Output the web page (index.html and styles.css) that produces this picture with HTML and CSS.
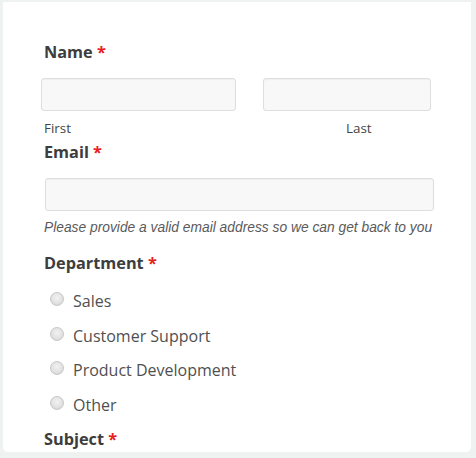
FILE: index.html
```html
<!DOCTYPE html>
<html>
<head>
<meta charset="utf-8">
<link rel="stylesheet" href="styles.css">
</head>
<body>
<div class="card">
  <div class="label label-name">Name <span class="req">*</span></div>
  <div class="name-row">
    <input class="field field-first" type="text">
    <input class="field field-last" type="text">
    <div class="sub">First</div>
    <div class="sub sub-last">Last</div>
  </div>
  <div class="label label-email">Email <span class="req">*</span></div>
  <input class="field field-email" type="text">
  <div class="help">Please provide a valid email address so we can get back to you</div>
  <div class="label label-dept">Department <span class="req">*</span></div>
  <div class="radios">
    <label class="radio"><span class="dot"></span>Sales</label>
    <label class="radio"><span class="dot"></span>Customer Support</label>
    <label class="radio"><span class="dot"></span>Product Development</label>
    <label class="radio"><span class="dot"></span>Other</label>
  </div>
  <div class="label label-subject">Subject <span class="req">*</span></div>
</div>
</body>
</html>
```
FILE: styles.css
```css
html, body {
  margin: 0;
  padding: 0;
}
body {
  width: 476px;
  height: 458px;
  overflow: hidden;
  background: #eef3f2;
  font-family: "Open Sans", sans-serif;
  color: #444;
  padding: 2px 0 0 3px;
  box-sizing: border-box;
}
.card {
  width: 468px;
  height: 450px;
  background: #fff;
  box-sizing: border-box;
  border-radius: 0 0 5px 5px;
  padding: 39px 0 0 38px;
  overflow: hidden;
}
.label {
  font-weight: 700;
  font-size: 16.3px;
  line-height: 22px;
  color: #3d3d3d;
  padding-left: 3px;
}
.req { color: #e8201c; }
.name-row {
  display: grid;
  grid-template-columns: 195px 168px;
  column-gap: 27px;
  margin-top: 15px;
}
.field {
  display: block;
  height: 33px;
  margin: 0;
  box-sizing: border-box;
  background: #f8f8f8;
  border: 1px solid #dedede;
  border-radius: 3px;
  box-shadow: inset 0 1px 1px rgba(0,0,0,0.04);
  outline: none;
}
.sub {
  font-size: 13.4px;
  line-height: 18px;
  margin-top: 8px;
  padding-left: 3px;
  color: #444;
}
.sub-last { padding-left: 83px; }
.label-email { margin-top: 4px; }
.field-email {
  width: 389px;
  margin: 15px 0 0 4px;
}
.help {
  font-family: "Liberation Sans", Arial, sans-serif;
  font-style: italic;
  font-size: 13.8px;
  line-height: 18px;
  color: #5a5a5a;
  margin: 8px 0 0 3px;
  white-space: nowrap;
}
.label-dept { margin-top: 15px; }
.radios {
  display: flex;
  flex-direction: column;
  gap: 12.7px;
  margin-top: 16px;
  padding-left: 9px;
}
.radio {
  display: flex;
  align-items: center;
  font-size: 16px;
  line-height: 22px;
  color: #505050;
}
.dot {
  width: 14px;
  height: 14px;
  box-sizing: border-box;
  border-radius: 50%;
  border: 1px solid #c8c8c8;
  background: radial-gradient(circle at 50% 40%, #f2f2f2 0%, #e2e2e2 55%, #cfcfcf 100%);
  margin-right: 9px;
  margin-top: -4px;
  flex: none;
}
.label-subject { margin-top: 12px; }
```
